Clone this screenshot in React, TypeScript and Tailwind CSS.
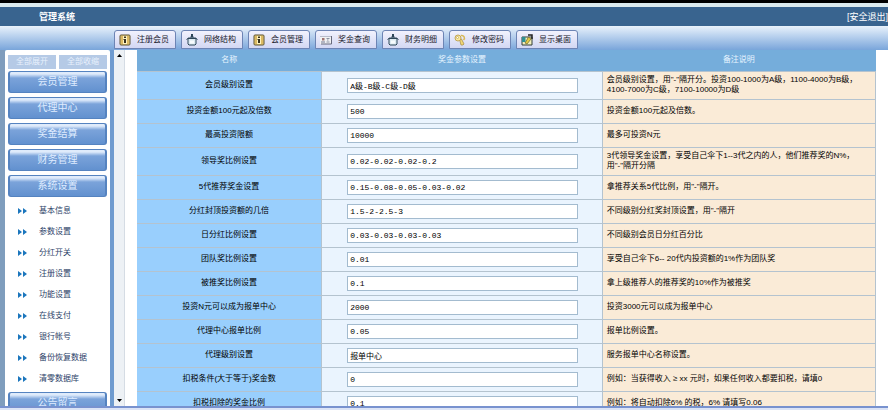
import type { ReactNode } from "react";

const tabs = [
  { label: "注册会员", icon: <BookIcon /> },
  { label: "网络结构", icon: <BagIcon /> },
  { label: "会员管理", icon: <BookIcon /> },
  { label: "奖金查询", icon: <CardIcon /> },
  { label: "财务明细", icon: <BagIcon /> },
  { label: "修改密码", icon: <KeyIcon /> },
  { label: "显示桌面", icon: <DesktopIcon /> },
];

const groups = ["会员管理", "代理中心", "奖金结算", "财务管理", "系统设置"];

const links = [
  "基本信息",
  "参数设置",
  "分红开关",
  "注册设置",
  "功能设置",
  "在线支付",
  "银行帐号",
  "备份恢复数据",
  "清零数据库",
];

const rows = [
  { name: "会员级别设置", value: "A级-B级-C级-D级", note: ["会员级别设置，用\"-\"隔开分。投资100-1000为A级，1100-4000为B级，", "4100-7000为C级，7100-10000为D级"] },
  { name: "投资金额100元起及倍数", value: "500", note: ["投资金额100元起及倍数。"] },
  { name: "最高投资限额", value: "10000", note: ["最多可投资N元"] },
  { name: "领导奖比例设置", value: "0.02-0.02-0.02-0.2", note: ["3代领导奖金设置，享受自己伞下1--3代之内的人，他们推荐奖的N%，", "用\"-\"隔开分隔"] },
  { name: "5代推荐奖金设置", value: "0.15-0.08-0.05-0.03-0.02", note: ["拿推荐关系5代比例，用\"-\"隔开。"] },
  { name: "分红封顶投资额的几倍", value: "1.5-2-2.5-3", note: ["不同级别分红奖封顶设置，用\"-\"隔开"] },
  { name: "日分红比例设置", value: "0.03-0.03-0.03-0.03", note: ["不同级别会员日分红百分比"] },
  { name: "团队奖比例设置", value: "0.01", note: ["享受自己伞下6-- 20代内投资额的1%作为团队奖"] },
  { name: "被推奖比例设置", value: "0.1", note: ["拿上级推荐人的推荐奖的10%作为被推奖"] },
  { name: "投资N元可以成为报单中心", value: "2000", note: ["投资3000元可以成为报单中心"] },
  { name: "代理中心报单比例", value: "0.05", note: ["报单比例设置。"] },
  { name: "代理级别设置", value: "报单中心", note: ["服务报单中心名称设置。"] },
  { name: "扣税条件(大于等于)奖金数", value: "0", note: ["例如：当获得收入 ≥ xx 元时，如果任何收入都要扣税，请填0"] },
  { name: "扣税扣除的奖金比例", value: "0.1", note: ["例如：将自动扣除6% 的税，6% 请填写0.06"] },
];

function BookIcon() {
  return (
    <svg viewBox="0 0 12 12" className="size-3 shrink-0">
      <rect x="1" y="1" width="10" height="10" rx="1" fill="#f0d47c" stroke="#5b5130" />
      <rect x="4" y="2" width="4" height="8" fill="#fff3bd" />
      <path d="M5 2.500h2v1.500H5zM4.500 5H7v4H5V6h-.5z" fill="#37311f" />
      <path d="M3 2v8M9 2v8" stroke="#c9a04a" />
    </svg>
  );
}

function BagIcon() {
  return (
    <svg viewBox="0 0 12 12" className="size-3 shrink-0">
      <path d="M2 4.500h8v5.500L9 11H3l-1-1z" fill="#dceaf2" stroke="#2d4658" />
      <path d="M.5 5.500l2-1.500h7l2 1.500" fill="none" stroke="#2d4658" />
      <path d="M5 0h2v2l1 1.500H4L5 2z" fill="#2d4658" />
      <path d="M4 6.500h4v3H4z" fill="#f7fbfd" />
    </svg>
  );
}

function CardIcon() {
  return (
    <svg viewBox="0 0 12 12" className="size-3 shrink-0">
      <path d="M0 2h12v8H0z" fill="#f0f1f3" />
      <path d="M11.500 2v8H1" fill="none" stroke="#66697c" />
      <path d="M0 2.500h11" stroke="#b8bccb" />
      <path d="M2 4h2.500v2.500H2z" fill="#a07472" />
      <path d="M1 8h4" stroke="#727991" />
      <path d="M6.500 4.500h3M7 6h1.500M6.500 8h3" stroke="#8d93a3" />
    </svg>
  );
}

function KeyIcon() {
  return (
    <svg viewBox="0 0 12 12" className="size-3 shrink-0">
      <path d="M7 1.500c3-.5 4.500 2.500 2.500 4.500" fill="none" stroke="#d9b957" strokeWidth="1.500" />
      <path d="M5.500 5.500L7 11h2l1-1-2.500-5z" fill="#f1d776" stroke="#a48740" strokeWidth=".7" />
      <circle cx="4" cy="4" r="3" fill="#fae99b" stroke="#c2a65a" />
      <circle cx="3.500" cy="3.500" r="1" fill="#fff" stroke="#a48740" strokeWidth=".5" />
    </svg>
  );
}

function DesktopIcon() {
  return (
    <svg viewBox="0 0 12 12" className="size-3 shrink-0">
      <path d="M1 3h10v8H1z" fill="#f2efbd" stroke="#333d38" />
      <path d="M1 3h3.500v5H1z" fill="#2f9093" />
      <path d="M4 9l3.500-6 2.500 2-4 5z" fill="#e5cc45" stroke="#55511f" strokeWidth=".6" />
      <path d="M7 1h4v4" fill="none" stroke="#222" strokeWidth="1.500" />
    </svg>
  );
}

function MenuButton({ children }: { children: ReactNode }) {
  return (
    <button className="h-[22px] w-full shrink-0 rounded-[3px] border-x-2 border-y border-[#5583c0] bg-linear-to-b from-[#dfebfb] from-10% via-[#7ba3da] via-30% to-[#6291cf] text-[10px] leading-4 text-[#dfecff]">
      {children}
    </button>
  );
}

export default function App() {
  return (
    <div className="flex h-screen flex-col overflow-hidden border-b-2 border-[#dce4f6] bg-white font-['Liberation_Sans','Noto_Sans_CJK_SC',sans-serif] text-[8px] leading-[10px] text-black">
      <div className="h-[7px] shrink-0 border-t-3 border-black bg-[#dcebef]" />
      <header className="flex h-[19px] shrink-0 items-center justify-between bg-[#39648f] pl-[39px] text-[9px] text-white">
        <h1 className="font-bold">管理系统</h1>
        <a href="#logout">[安全退出]</a>
      </header>

      <nav className="flex h-6 shrink-0 items-end gap-[5px] bg-linear-to-b from-[#e9f2fb] to-[#79a5da] pb-px pl-[114px]">
        {tabs.map((tab) => (
          <button key={tab.label} className="flex h-[19px] w-[62px] items-center gap-1.5 rounded-t-[3px] border border-[#6d84b4] bg-linear-to-b from-[#f2f2fd] to-[#d3d7f3] pl-1 whitespace-nowrap text-[#20202c]">
            {tab.icon}
            {tab.label}
          </button>
        ))}
      </nav>

      <div className="flex min-h-0 flex-1 border-b-2 border-[#7892cf] bg-[#75addb]">
        <div className="w-[5px] shrink-0 bg-[#7f9dbd]" />
        <aside className="flex w-[105px] shrink-0 flex-col overflow-hidden rounded-t-[2px] bg-white px-[3px] pt-[5px]">
          <div className="mb-0.5 flex shrink-0 gap-[3px]">
            <button className="h-3.5 flex-1 bg-[#b5cae6] text-[#e8f1fd]">全部展开</button>
            <button className="h-3.5 flex-1 bg-[#b5cae6] text-[#e8f1fd]">全部收缩</button>
          </div>
          <div className="flex flex-col gap-1">
            {groups.map((group) => (
              <MenuButton key={group}>{group}</MenuButton>
            ))}
          </div>
          <ul className="my-[3px] shrink-0">
            {links.map((link) => (
              <li key={link}>
                <a href="#settings" className="flex h-[21px] items-center gap-3 pl-2.5 text-[#2d4268]">
                  <svg viewBox="0 0 9 6" className="h-1.5 w-[9px]" fill="#1b76bd">
                    <path d="M0 0l4 3-4 3zM5 0l4 3-4 3z" />
                  </svg>
                  {link}
                </a>
              </li>
            ))}
          </ul>
          <MenuButton>公告留言</MenuButton>
        </aside>
        <div className="w-1 shrink-0 bg-[#6f9bcf]" />
        <div className="flex w-[11px] shrink-0 flex-col items-center justify-between border-r border-[#d5dce4] bg-[#edf1f5] py-1">
          <svg viewBox="0 0 5 3" className="h-[3px] w-[5px]"><path d="M0 3l2.500-3L5 3z" /></svg>
          <svg viewBox="0 0 5 3" className="h-[3px] w-[5px]"><path d="M0 0h5L2.500 3z" /></svg>
        </div>

        <main className="min-w-0 flex-1 overflow-hidden bg-white px-3">
          <table className="w-full table-fixed border-collapse">
            <thead>
              <tr className="h-[21px] bg-[#75addb] text-[#e6f4ff]">
                <th className="w-1/4 p-0 font-normal">名称</th>
                <th className="w-[38%] p-0 font-normal">奖金参数设置</th>
                <th className="w-[37%] p-0 font-normal">备注说明</th>
              </tr>
            </thead>
            <tbody>
              {rows.map((row, i) => (
                <tr key={row.name} className="h-6 border-t border-[#b4c3cf]">
                  <th className="bg-[#99cffd] p-0 font-normal">
                    <label htmlFor={`param-${i}`}>{row.name}</label>
                  </th>
                  <td className="border-x border-[#b4c3cf] bg-[#eaf4fe] py-0 pr-6 pl-[25px]">
                    <input
                      id={`param-${i}`}
                      defaultValue={row.value}
                      className="block h-[15px] w-full border border-[#a3bbcf] bg-white px-0.5 font-['Liberation_Mono','Noto_Sans_CJK_SC',monospace]"
                    />
                  </td>
                  <td className={row.note.length > 1 ? "h-7 border-r border-[#b4c3cf] bg-[#faebd7] py-0 pl-1 whitespace-nowrap" : "border-r border-[#b4c3cf] bg-[#faebd7] py-0 pl-1 whitespace-nowrap"}>
                    {row.note.map((line) => (
                      <p key={line}>{line}</p>
                    ))}
                  </td>
                </tr>
              ))}
            </tbody>
          </table>
        </main>
      </div>
    </div>
  );
}
